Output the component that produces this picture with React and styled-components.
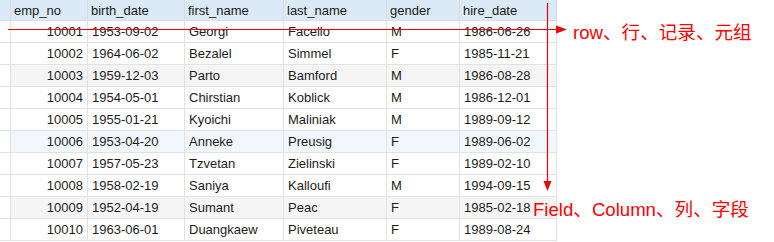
import React from "react";
import styled, { createGlobalStyle } from "styled-components";

const Global = createGlobalStyle`
  html, body { margin: 0; padding: 0; background: #fff; }
  body { font-family: "Liberation Sans", Arial, sans-serif; }
`;

const Page = styled.div`
  position: relative;
  width: 774px;
  height: 242px;
  overflow: hidden;
  background: #fff;
`;

const Grid = styled.div`
  display: grid;
  grid-template-columns: 11px 77px 97px 99px 103px 73px 97px;
  grid-auto-rows: 22px;
  grid-template-rows: 21px;
  width: max-content;
  font-size: 13px;
  color: #1c1c1c;
`;

const Cell = styled.div`
  box-sizing: border-box;
  border-right: 1px solid #e2e2e2;
  border-bottom: 1px solid #e2e2e2;
  padding: 0 4px;
  display: flex;
  align-items: center;
  justify-content: ${(p) => (p.$right ? "flex-end" : "flex-start")};
  white-space: nowrap;
  overflow: hidden;
  background: ${(p) => p.$bg || "#fff"};
`;

const HeadCell = styled(Cell)`
  background: #dce9f6;
  border-right-color: #d2dde8;
  border-bottom-color: #d6dfe8;
  padding-left: 3px;
  color: #1a1a1a;
`;

const Stub = styled(Cell)`
  padding: 0;
  background: #fff;
`;

const HeadStub = styled(Stub)`
  background: #dce9f6;
  border-right-color: #d2dde8;
  border-bottom-color: #d6dfe8;
`;

const Overlay = styled.svg`
  position: absolute;
  left: 0;
  top: 0;
  pointer-events: none;
`;

const Label = styled.div`
  position: absolute;
  left: ${(p) => p.$x}px;
  top: ${(p) => p.$y}px;
  font-family: "Liberation Sans", "Noto Sans CJK SC", sans-serif;
  font-size: 18.6px;
  line-height: 24px;
  color: #ff0000;
  white-space: nowrap;
`;

const columns = ["emp_no", "birth_date", "first_name", "last_name", "gender", "hire_date"];

const rows = [
  ["10001", "1953-09-02", "Georgi", "Facello", "M", "1986-06-26"],
  ["10002", "1964-06-02", "Bezalel", "Simmel", "F", "1985-11-21"],
  ["10003", "1959-12-03", "Parto", "Bamford", "M", "1986-08-28"],
  ["10004", "1954-05-01", "Chirstian", "Koblick", "M", "1986-12-01"],
  ["10005", "1955-01-21", "Kyoichi", "Maliniak", "M", "1989-09-12"],
  ["10006", "1953-04-20", "Anneke", "Preusig", "F", "1989-06-02"],
  ["10007", "1957-05-23", "Tzvetan", "Zielinski", "F", "1989-02-10"],
  ["10008", "1958-02-19", "Saniya", "Kalloufi", "M", "1994-09-15"],
  ["10009", "1952-04-19", "Sumant", "Peac", "F", "1985-02-18"],
  ["10010", "1963-06-01", "Duangkaew", "Piveteau", "F", "1989-08-24"],
];

const rowBg = (i) => (i === 2 || i === 8 ? "#f5f5f5" : i === 5 ? "#f1f7fd" : "#fff");

export default function App() {
  return (
    <>
      <Global />
      <Page>
        <Grid>
          <HeadStub />
          {columns.map((c) => (
            <HeadCell key={c}>{c}</HeadCell>
          ))}
          {rows.map((r, i) => (
            <React.Fragment key={r[0]}>
              <Stub />
              {r.map((v, j) => (
                <Cell key={j} $right={j === 0} $bg={rowBg(i)}>
                  {v}
                </Cell>
              ))}
            </React.Fragment>
          ))}
        </Grid>
        <Overlay width="774" height="242" viewBox="0 0 774 242">
          <line x1="8" y1="29.5" x2="558" y2="29.5" stroke="#ee0000" strokeWidth="1.2" />
          <polygon points="556,25.5 567,29.5 556,33.5" fill="#ee0000" />
          <line x1="547.5" y1="3" x2="547.5" y2="183" stroke="#ee0000" strokeWidth="1.2" />
          <polygon points="543.5,181 551.5,181 547.5,191" fill="#ee0000" />
        </Overlay>
        <Label $x={573} $y={21}>row、行、记录、元组</Label>
        <Label $x={533} $y={198}>Field、Column、列、字段</Label>
      </Page>
    </>
  );
}
